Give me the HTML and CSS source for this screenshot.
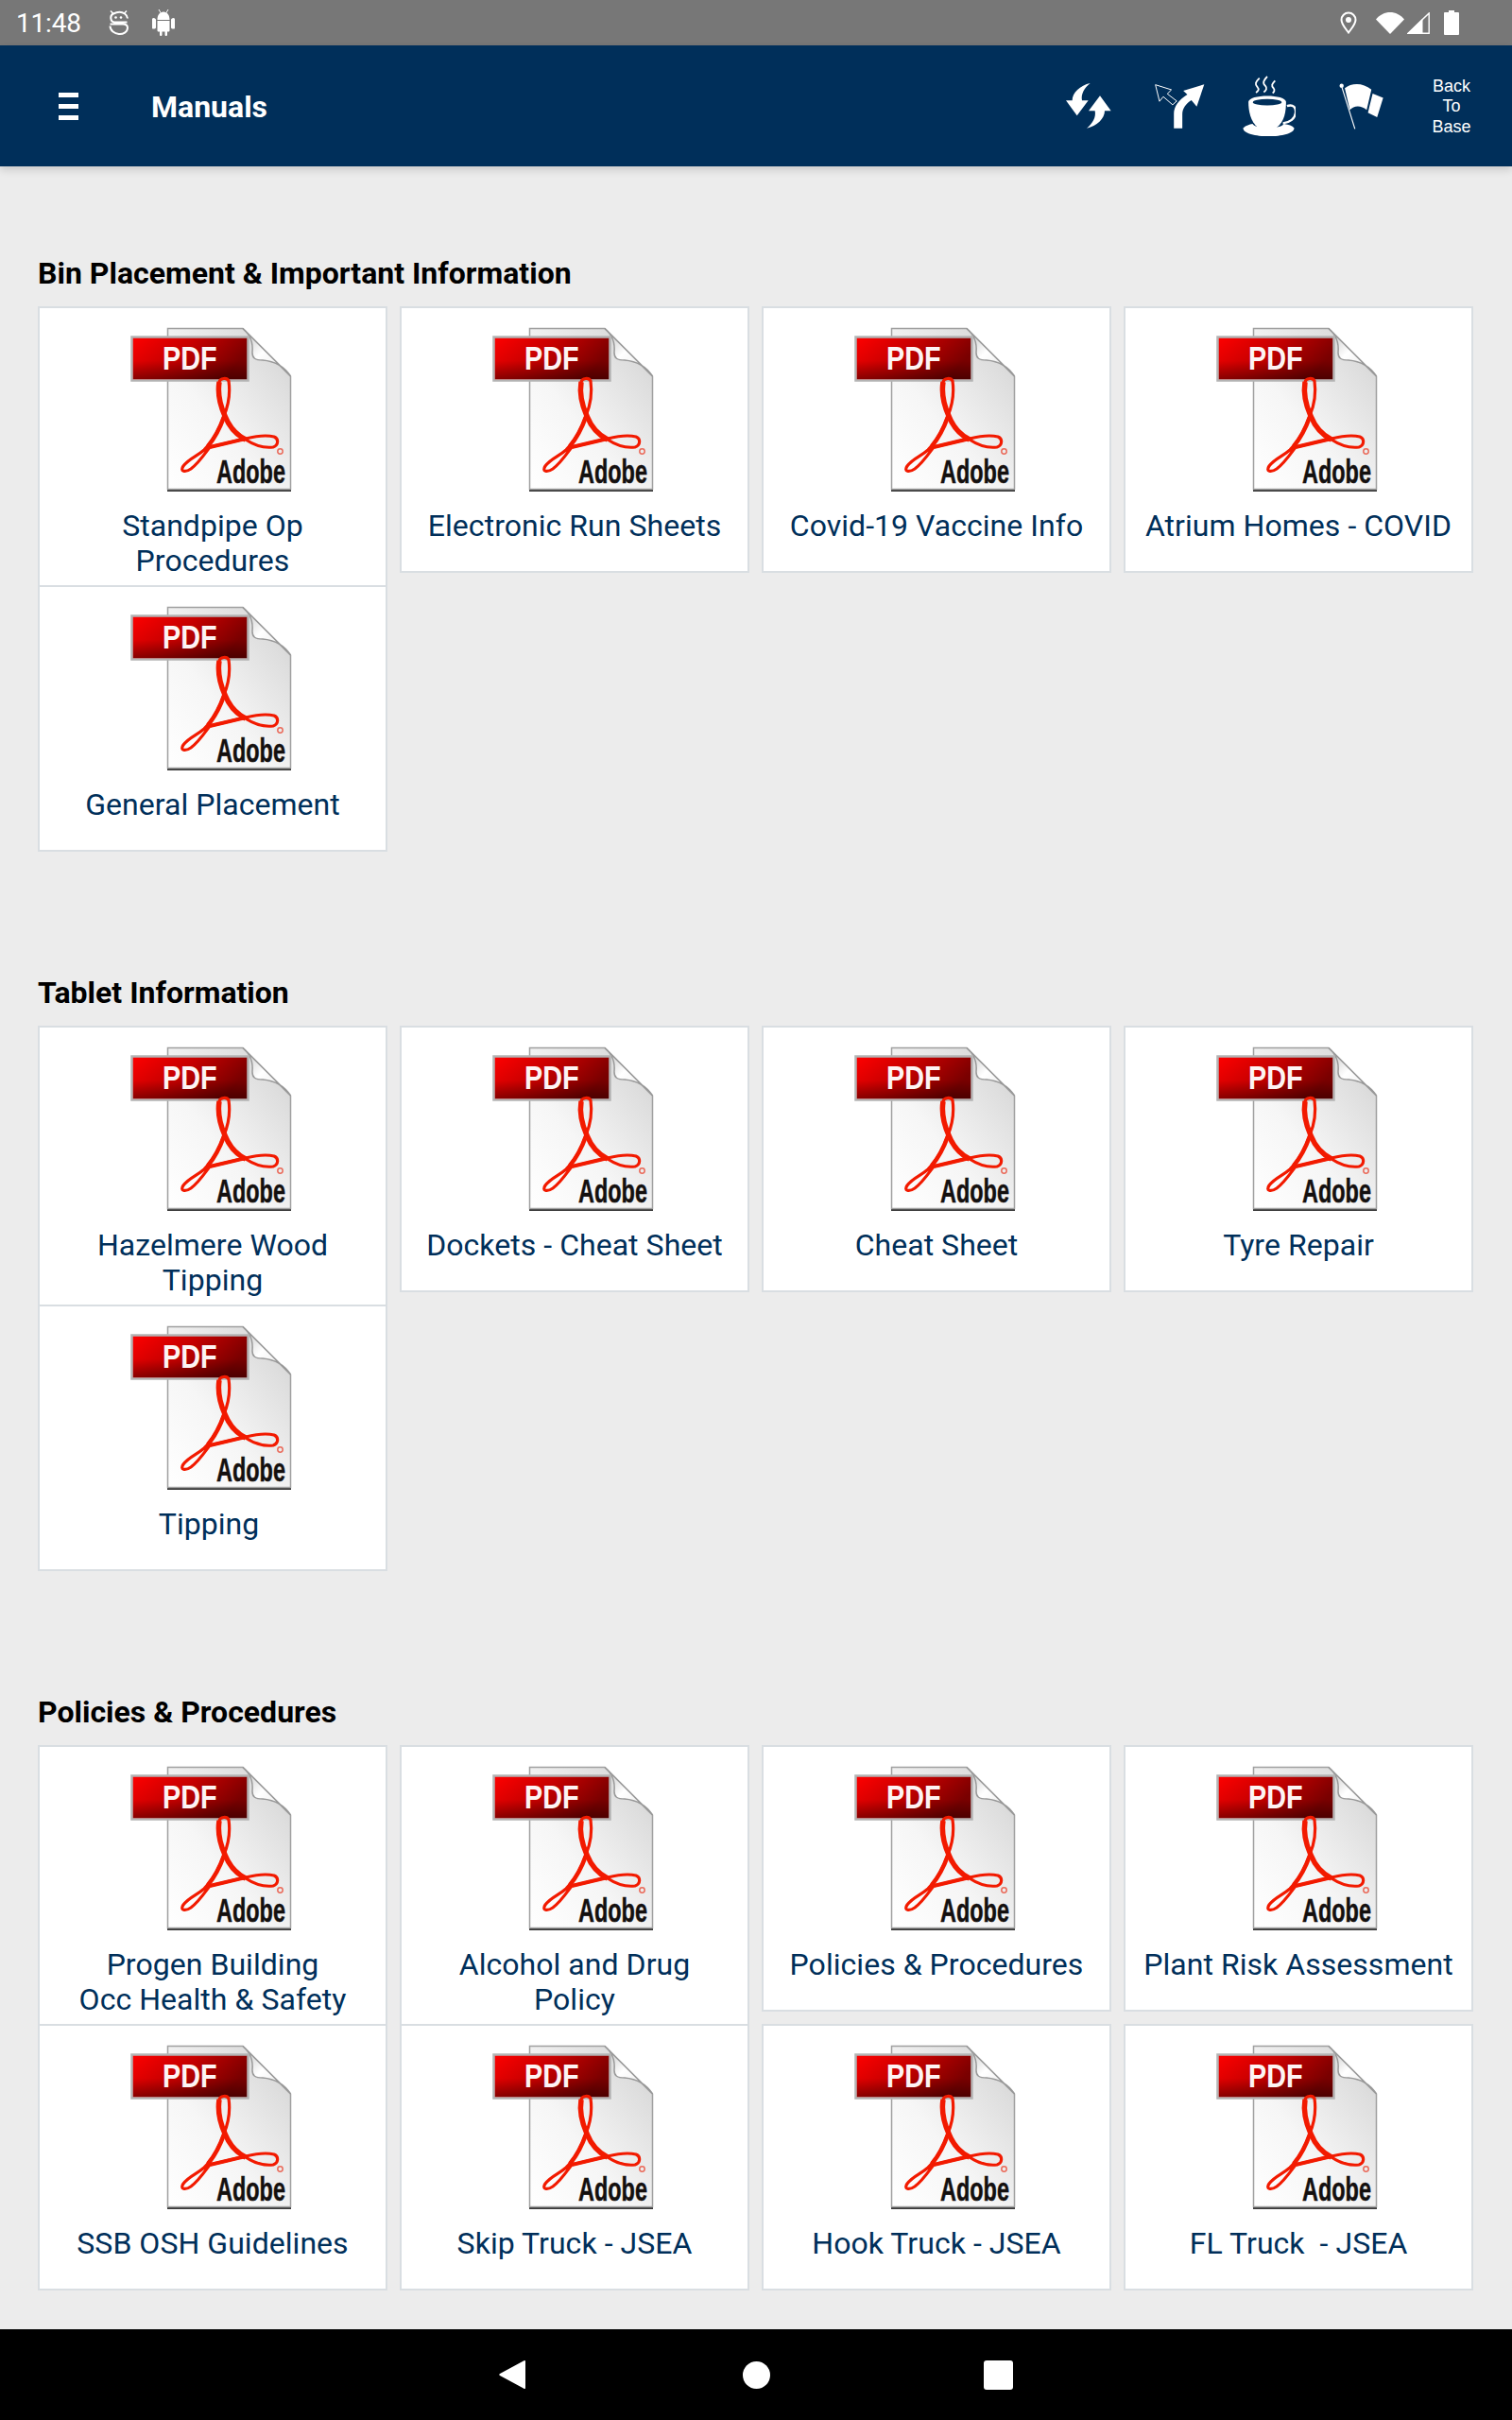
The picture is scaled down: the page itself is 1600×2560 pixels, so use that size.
FILE: index.html
```html
<!DOCTYPE html>
<html lang="en">
<head>
<meta charset="utf-8">
<title>Manuals</title>
<link rel="stylesheet" href="styles.css">
</head>
<body>
<svg class="defs" width="0" height="0" aria-hidden="true">
  <defs>
    <linearGradient id="pageFill" x1="0" y1="1" x2="1" y2="0">
      <stop offset="0" stop-color="#ffffff"/>
      <stop offset="0.4" stop-color="#f6f6f6"/>
      <stop offset="0.8" stop-color="#dedede"/>
      <stop offset="1" stop-color="#cfcfcf"/>
    </linearGradient>
    <linearGradient id="foldFill" x1="0" y1="0" x2="1" y2="1">
      <stop offset="0" stop-color="#bdbdbd"/>
      <stop offset="0.45" stop-color="#ffffff"/>
      <stop offset="1" stop-color="#e4e4e4"/>
    </linearGradient>
    <linearGradient id="labelFill" x1="0" y1="0" x2="1" y2="0.35">
      <stop offset="0" stop-color="#ff0000"/>
      <stop offset="0.5" stop-color="#c80000"/>
      <stop offset="1" stop-color="#7c0000"/>
    </linearGradient>
    <linearGradient id="labelShade" x1="0" y1="0" x2="0" y2="1">
      <stop offset="0" stop-color="#000" stop-opacity="0"/>
      <stop offset="0.55" stop-color="#000" stop-opacity="0.03"/>
      <stop offset="1" stop-color="#000" stop-opacity="0.38"/>
    </linearGradient>
    <symbol id="pdfArt" viewBox="0 0 190 190">
      <path d="M47 14H127L178 64V185H47Z" fill="#3a3a3a"/>
      <path d="M47.500 12.500H127L177.500 63V182.500H47.500Z" fill="url(#pageFill)" stroke="#a0a0a0" stroke-width="1.500"/>
      <path d="M127 12.500C136 20 138 28 137 38C137 44 140 46 148 46C160 47 171 53 177.500 63Z" fill="url(#foldFill)" stroke="#999" stroke-width="1.500"/>
      <rect x="9.500" y="21.500" width="123" height="46" fill="url(#labelFill)" stroke="#b4b4b4" stroke-width="2.500"/>
      <rect x="11" y="23" width="120" height="43" fill="url(#labelShade)"/>
      <path d="M112 68C114 82 112 93 107 105C102 120 95 132 86 141C78 148 70 150 64 158C60 164 66 165 72 161C80 155 86 146 92 138L130 129C142 126 152 125 160 127C165 129 165 136 159 138C150 139 139 136 130 130C120 125 112 115 108 105C103 92 100 80 102 69C103 65 110 64 112 68Z" fill="none" stroke="#f21a00" stroke-width="3.200" stroke-linejoin="round"/>
      <path d="M102 69C100 82 103 94 108 105C112 115 120 125 130 130" fill="none" stroke="#f21a00" stroke-width="5.500"/>
      <path d="M107 106C102 120 96 130 90 137" fill="none" stroke="#f21a00" stroke-width="4.500"/>
      <path d="M92 138L130 129" fill="none" stroke="#f21a00" stroke-width="4"/>
      <circle cx="166.500" cy="142.500" r="2.700" fill="none" stroke="#ea6a5a" stroke-width="1.500"/>
    </symbol>
  </defs>
</svg>

<div class="screen">
  <div class="status-bar">
    <span class="clock">11:48</span>
    <svg class="st-face" viewBox="0 0 21 27"><path d="M19.500 12.500H6C1.500 12 1 5 5 3.500C9 1.500 14 1.500 17 3.500C19 5 20 6.500 20 8.500M1.500 16.500C2 27 19.500 28 20 18.500C20 15.500 18 14.500 15 14.500H1.500" fill="none" stroke="#fff" stroke-width="2"/><circle cx="7.500" cy="7.500" r="1.300" fill="#fff"/><circle cx="13" cy="7.500" r="1.300" fill="#fff"/><path d="M2 .5L5 3.500M19 .5L16 3.500" stroke="#fff" stroke-width="1.500"/></svg>
    <svg class="st-droid" viewBox="0 0 24 28"><path d="M5.500 11C5.500 6 8 2.500 12 2.500S18.500 6 18.500 11ZM5.500 12H18.500V22C18.500 23 18 23.500 17 23.500H16V26.500C16 28.500 13.500 28.500 13.500 26.500V23.500H10.500V26.500C10.500 28.500 8 28.500 8 26.500V23.500H7C6 23.500 5.500 23 5.500 22ZM1.500 9C3 9 4 10 4 11V19C4 20 3 20.500 1.500 20.500S0 20 0 19V11C0 10 0 9 1.500 9ZM22.500 9C24 9 24 10 24 11V19C24 20 24 20.500 22.500 20.500S20 20 20 19V11C20 10 21 9 22.500 9Z" fill="#fff"/><path d="M7 0L9 3.500M17 0L15 3.500" stroke="#fff"/></svg>
    <span class="status-space"></span>
    <svg class="st-pin" viewBox="0 0 18 24"><path d="M9 22.500C5 17 1.500 13.500 1.500 9A7.500 7.500 0 0 1 16.500 9C16.500 13.500 13 17 9 22.500Z" fill="none" stroke="#fff" stroke-width="2"/><circle cx="9" cy="9" r="3" fill="#fff"/></svg>
    <svg class="st-wifi" viewBox="0 0 30 24"><path d="M0 8.500C8 -1.500 22 -1.500 30 8.500L15 24Z" fill="#fff"/></svg>
    <svg class="st-signal" viewBox="0 0 24 23"><path d="M0 23L16.500 6.500V23Z" fill="#fff"/><path d="M1 22.300L23.200 .9V22.300Z" fill="none" stroke="#fff" stroke-width="1.400"/></svg>
    <svg class="st-battery" viewBox="0 0 16 26"><path d="M5 0H11V2H15C15.500 2 16 2.500 16 3V25C16 25.500 15.500 26 15 26H1C.5 26 0 25.500 0 25V3C0 2.500 .5 2 1 2H5Z" fill="#fff"/></svg>
  </div>

  <header class="toolbar">
    <div class="menu-icon"><span></span><span></span><span></span></div>
    <h1 class="title">Manuals</h1>
    <div class="actions">
      <div class="action">
        <svg class="ic-sync" viewBox="145 265 144 144"><path d="M222 265C190 272 165 295 165 320H145L180 368L216 320H196C192 300 203 280 222 265Z" fill="#fff"/><path d="M211 408C243 401 268 378 268 353H288L253 305L217 353H237C241 373 230 393 211 408Z" fill="#fff"/></svg>
      </div>
      <div class="action">
        <svg class="ic-turn" viewBox="424 264 160 142"><path d="M426 266L477 282L464 295L494 318L481 330L451 304L439 319Z" fill="none" stroke="#fff" stroke-width="3"/><path d="M485 405V358C485 335 500 315 528 297L515 285L582 265L558 336L541 315C525 325 512 340 512 360V405Z" fill="#fff"/></svg>
      </div>
      <div class="action">
        <svg class="ic-coffee" viewBox="704 238 168 196"><path d="M705 405C715 397 725 394 735 392C745 410 825 410 835 392C850 394 862 398 868 405C868 440 705 440 705 405Z" fill="#fff"/><path d="M722 322C722 296 842 296 842 322C842 350 838 385 812 404C800 412 765 412 752 404C728 385 722 350 722 322Z" fill="#fff"/><ellipse cx="782" cy="323" rx="46" ry="10" fill="#002f5a"/><path d="M845 335C865 328 875 340 872 358C870 375 855 388 832 390" fill="none" stroke="#fff" stroke-width="7"/><path d="M757 246C745 258 741 266 751 275C758 282 752 288 746 292M782 241C770 253 766 262 776 271C783 278 778 286 771 291M807 254C797 264 794 270 802 278C807 284 804 290 799 294" fill="none" stroke="#fff" stroke-width="5.500"/></svg>
      </div>
      <div class="action">
        <svg class="ic-flag" viewBox="1010 262 140 146"><path d="M1018 272L1060 406" stroke="#fff" stroke-width="3.500"/><circle cx="1018" cy="270" r="6.500" fill="#fff"/><path d="M1028 278C1050 260 1085 260 1112 282L1097 346C1078 330 1057 332 1044 346Z" fill="#fff"/><path d="M1116 295L1149 308L1130 369L1101 355Z" fill="#fff"/></svg>
      </div>
      <div class="action back-base">Back<br>To<br>Base</div>
    </div>
  </header>

  <main class="content">
    <section class="group">
      <h2 class="group-title">Bin Placement &amp; Important Information</h2>
      <div class="grid">
        <a class="card tall"><svg class="pdf" viewBox="0 0 190 190"><use href="#pdfArt"/><text class="pdf-word" transform="translate(42 56) scale(.8 1)">PDF</text><text class="pdf-brand" transform="translate(99 176) scale(.67 1)">Adobe</text></svg><span class="name">Standpipe Op<br>Procedures</span></a>
        <a class="card"><svg class="pdf" viewBox="0 0 190 190"><use href="#pdfArt"/><text class="pdf-word" transform="translate(42 56) scale(.8 1)">PDF</text><text class="pdf-brand" transform="translate(99 176) scale(.67 1)">Adobe</text></svg><span class="name">Electronic Run Sheets</span></a>
        <a class="card"><svg class="pdf" viewBox="0 0 190 190"><use href="#pdfArt"/><text class="pdf-word" transform="translate(42 56) scale(.8 1)">PDF</text><text class="pdf-brand" transform="translate(99 176) scale(.67 1)">Adobe</text></svg><span class="name">Covid-19 Vaccine Info</span></a>
        <a class="card"><svg class="pdf" viewBox="0 0 190 190"><use href="#pdfArt"/><text class="pdf-word" transform="translate(42 56) scale(.8 1)">PDF</text><text class="pdf-brand" transform="translate(99 176) scale(.67 1)">Adobe</text></svg><span class="name">Atrium Homes - COVID</span></a>
        <a class="card"><svg class="pdf" viewBox="0 0 190 190"><use href="#pdfArt"/><text class="pdf-word" transform="translate(42 56) scale(.8 1)">PDF</text><text class="pdf-brand" transform="translate(99 176) scale(.67 1)">Adobe</text></svg><span class="name">General Placement</span></a>
      </div>
    </section>

    <section class="group">
      <h2 class="group-title">Tablet Information</h2>
      <div class="grid">
        <a class="card tall"><svg class="pdf" viewBox="0 0 190 190"><use href="#pdfArt"/><text class="pdf-word" transform="translate(42 56) scale(.8 1)">PDF</text><text class="pdf-brand" transform="translate(99 176) scale(.67 1)">Adobe</text></svg><span class="name">Hazelmere Wood<br>Tipping</span></a>
        <a class="card"><svg class="pdf" viewBox="0 0 190 190"><use href="#pdfArt"/><text class="pdf-word" transform="translate(42 56) scale(.8 1)">PDF</text><text class="pdf-brand" transform="translate(99 176) scale(.67 1)">Adobe</text></svg><span class="name">Dockets - Cheat Sheet</span></a>
        <a class="card"><svg class="pdf" viewBox="0 0 190 190"><use href="#pdfArt"/><text class="pdf-word" transform="translate(42 56) scale(.8 1)">PDF</text><text class="pdf-brand" transform="translate(99 176) scale(.67 1)">Adobe</text></svg><span class="name">Cheat Sheet</span></a>
        <a class="card"><svg class="pdf" viewBox="0 0 190 190"><use href="#pdfArt"/><text class="pdf-word" transform="translate(42 56) scale(.8 1)">PDF</text><text class="pdf-brand" transform="translate(99 176) scale(.67 1)">Adobe</text></svg><span class="name">Tyre Repair</span></a>
        <a class="card"><svg class="pdf" viewBox="0 0 190 190"><use href="#pdfArt"/><text class="pdf-word" transform="translate(42 56) scale(.8 1)">PDF</text><text class="pdf-brand" transform="translate(99 176) scale(.67 1)">Adobe</text></svg><span class="name">Tipping&nbsp;</span></a>
      </div>
    </section>

    <section class="group">
      <h2 class="group-title">Policies &amp; Procedures</h2>
      <div class="grid">
        <a class="card tall"><svg class="pdf" viewBox="0 0 190 190"><use href="#pdfArt"/><text class="pdf-word" transform="translate(42 56) scale(.8 1)">PDF</text><text class="pdf-brand" transform="translate(99 176) scale(.67 1)">Adobe</text></svg><span class="name">Progen Building<br>Occ Health &amp; Safety</span></a>
        <a class="card tall"><svg class="pdf" viewBox="0 0 190 190"><use href="#pdfArt"/><text class="pdf-word" transform="translate(42 56) scale(.8 1)">PDF</text><text class="pdf-brand" transform="translate(99 176) scale(.67 1)">Adobe</text></svg><span class="name">Alcohol and Drug<br>Policy</span></a>
        <a class="card"><svg class="pdf" viewBox="0 0 190 190"><use href="#pdfArt"/><text class="pdf-word" transform="translate(42 56) scale(.8 1)">PDF</text><text class="pdf-brand" transform="translate(99 176) scale(.67 1)">Adobe</text></svg><span class="name">Policies &amp; Procedures</span></a>
        <a class="card"><svg class="pdf" viewBox="0 0 190 190"><use href="#pdfArt"/><text class="pdf-word" transform="translate(42 56) scale(.8 1)">PDF</text><text class="pdf-brand" transform="translate(99 176) scale(.67 1)">Adobe</text></svg><span class="name">Plant Risk Assessment</span></a>
        <a class="card"><svg class="pdf" viewBox="0 0 190 190"><use href="#pdfArt"/><text class="pdf-word" transform="translate(42 56) scale(.8 1)">PDF</text><text class="pdf-brand" transform="translate(99 176) scale(.67 1)">Adobe</text></svg><span class="name">SSB OSH Guidelines</span></a>
        <a class="card"><svg class="pdf" viewBox="0 0 190 190"><use href="#pdfArt"/><text class="pdf-word" transform="translate(42 56) scale(.8 1)">PDF</text><text class="pdf-brand" transform="translate(99 176) scale(.67 1)">Adobe</text></svg><span class="name">Skip Truck - JSEA</span></a>
        <a class="card"><svg class="pdf" viewBox="0 0 190 190"><use href="#pdfArt"/><text class="pdf-word" transform="translate(42 56) scale(.8 1)">PDF</text><text class="pdf-brand" transform="translate(99 176) scale(.67 1)">Adobe</text></svg><span class="name">Hook Truck - JSEA</span></a>
        <a class="card"><svg class="pdf" viewBox="0 0 190 190"><use href="#pdfArt"/><text class="pdf-word" transform="translate(42 56) scale(.8 1)">PDF</text><text class="pdf-brand" transform="translate(99 176) scale(.67 1)">Adobe</text></svg><span class="name">FL Truck  - JSEA</span></a>
      </div>
    </section>
  </main>

  <nav class="nav-bar">
    <svg class="nav-back" viewBox="0 0 28 32"><path d="M26 1.500C27 .5 28 1 28 2V30C28 31 27 31.500 26 30.500L1 17C0 16.500 0 15.500 1 15Z" fill="#fff"/></svg>
    <span class="nav-home"></span>
    <span class="nav-recent"></span>
  </nav>
</div>
</body>
</html>
```
FILE: styles.css
```css
* { box-sizing: border-box; }
html, body { margin: 0; padding: 0; }
body { font-family: Roboto, "Liberation Sans", sans-serif; background: #ececec; }
.defs { position: absolute; }
.screen { width: 1600px; height: 2560px; display: flex; flex-direction: column; overflow: hidden; background: #ececec; }

.status-bar { height: 48px; flex: none; background: #777777; display: flex; align-items: center; padding: 0 56px 0 17px; color: #fff; }
.clock { font-size: 28px; font-weight: 400; letter-spacing: -.2px; width: 68px; }
.status-space { flex: 1; }
.status-bar svg { display: block; flex: none; }
.st-face { width: 21px; height: 27px; margin-left: 30px; }
.st-droid { width: 24px; height: 28px; margin-left: 25px; }
.st-pin { width: 18px; height: 24px; }
.st-wifi { width: 30px; height: 24px; margin-left: 20px; }
.st-signal { width: 24px; height: 23px; margin-left: 3px; }
.st-battery { width: 16px; height: 26px; margin-left: 15px; }

.toolbar { height: 128px; flex: none; background: #002f5a; display: flex; align-items: center; padding: 0 16px 0 62px; color: #fff; box-shadow: 0 4px 8px rgba(0, 0, 0, .14); position: relative; }
.menu-icon { width: 21px; display: flex; flex-direction: column; gap: 7px; }
.menu-icon span { display: block; height: 5px; background: #fff; }
.title { margin: 2px 0 0 77px; font-size: 32px; line-height: 37px; font-weight: 700; flex: 1; }
.actions { display: flex; align-items: center; }
.action { width: 96px; display: flex; justify-content: center; align-items: center; }
.action svg { display: block; }
.ic-sync { width: 48px; height: 48px; }
.ic-turn { width: 53px; height: 47px; }
.ic-coffee { width: 56px; height: 65px; margin-right: 3px; }
.ic-flag { width: 47px; height: 49px; }
.back-base { font-family: "Liberation Sans", Arial, sans-serif; font-size: 18px; line-height: 21.5px; text-align: center; padding-top: 2px; }

.content { flex: 1; padding: 95px 40px 0 40px; display: flex; flex-direction: column; gap: 131px; }
.group-title { margin: 0 0 16px; font-size: 32px; line-height: 37px; font-weight: 700; color: #000; }
.grid { display: grid; grid-template-columns: repeat(4, 370px); column-gap: 13px; align-items: start; }
.card { display: flex; flex-direction: column; align-items: center; min-height: 282px; padding: 9px 0 7px; background: #fff; border: 2px solid #d9dee2; }
.tall { border-bottom: 0; }
.pdf { display: block; width: 190px; height: 190px; flex: none; }
.pdf-word { font-family: "Liberation Sans", Arial, sans-serif; font-weight: 700; font-size: 36px; fill: #fdf4f4; }
.pdf-brand { font-family: "Liberation Sans", Arial, sans-serif; font-weight: 700; font-size: 35px; fill: #14100f; stroke: #14100f; stroke-width: .5px; }
.name { margin-top: 13px; font-size: 32px; line-height: 37px; letter-spacing: .04px; color: #002f5a; text-align: center; white-space: pre-wrap; }

.nav-bar { height: 96px; flex: none; background: #000; display: flex; align-items: center; position: relative; padding-left: 528px; }
.nav-back { display: block; width: 28px; height: 32px; }
.nav-home { width: 29px; height: 29px; border-radius: 50%; background: #fff; margin-left: 230px; }
.nav-recent { width: 31px; height: 31px; border-radius: 3px; background: #fff; margin-left: 226px; }
```
